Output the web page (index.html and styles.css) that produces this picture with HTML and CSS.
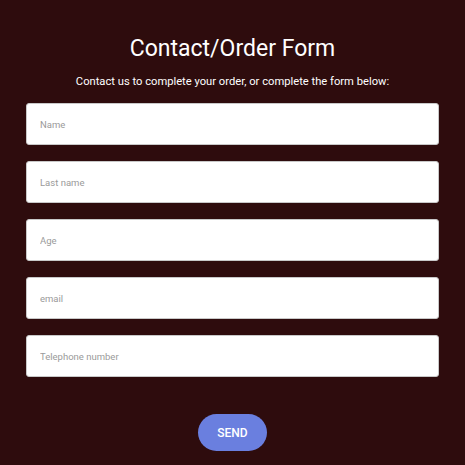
FILE: index.html
```html
<!DOCTYPE html>
<html>
<head>
<meta charset="utf-8">
<link rel="stylesheet" href="styles.css">
</head>
<body>
<div class="page">
  <h1 class="title">Contact/Order Form</h1>
  <p class="subtitle">Contact us to complete your order, or complete the form below:</p>
  <form class="form">
    <input class="field" type="text" placeholder="Name">
    <input class="field" type="text" placeholder="Last name">
    <input class="field" type="text" placeholder="Age">
    <input class="field" type="text" placeholder="email">
    <input class="field" type="text" placeholder="Telephone number">
    <button class="send" type="button">SEND</button>
  </form>
</div>
</body>
</html>
```
FILE: styles.css
```css
html, body {
  margin: 0;
  padding: 0;
  background: #2e0c0d;
  font-family: Roboto, "Liberation Sans", sans-serif;
}
.page {
  padding: 35px 26px 0 26px;
  display: flex;
  flex-direction: column;
  align-items: center;
}
.title {
  margin: 0;
  color: #ffffff;
  font-size: 23px;
  font-weight: 400;
  line-height: 27px;
}
.subtitle {
  margin: 13px 0 0 0;
  color: #ffffff;
  font-size: 11.2px;
  line-height: 14px;
}
.form {
  margin-top: 14px;
  width: 100%;
  display: flex;
  flex-direction: column;
  align-items: center;
  gap: 16px;
}
.field {
  box-sizing: border-box;
  width: 100%;
  height: 42px;
  margin: 0;
  border: 1px solid #c8c8c8;
  border-radius: 3px;
  background: #ffffff;
  padding: 0 13px;
  font-family: Roboto, "Liberation Sans", sans-serif;
  font-size: 9.5px;
  color: #333;
}
.field::placeholder {
  color: #9a9a9a;
}
.send {
  margin-top: 21px;
  width: 69px;
  height: 37px;
  border: none;
  border-radius: 19px;
  background: #6a7fdf;
  color: #ffffff;
  font-family: Roboto, "Liberation Sans", sans-serif;
  font-size: 12px;
  font-weight: 500;
}
```
